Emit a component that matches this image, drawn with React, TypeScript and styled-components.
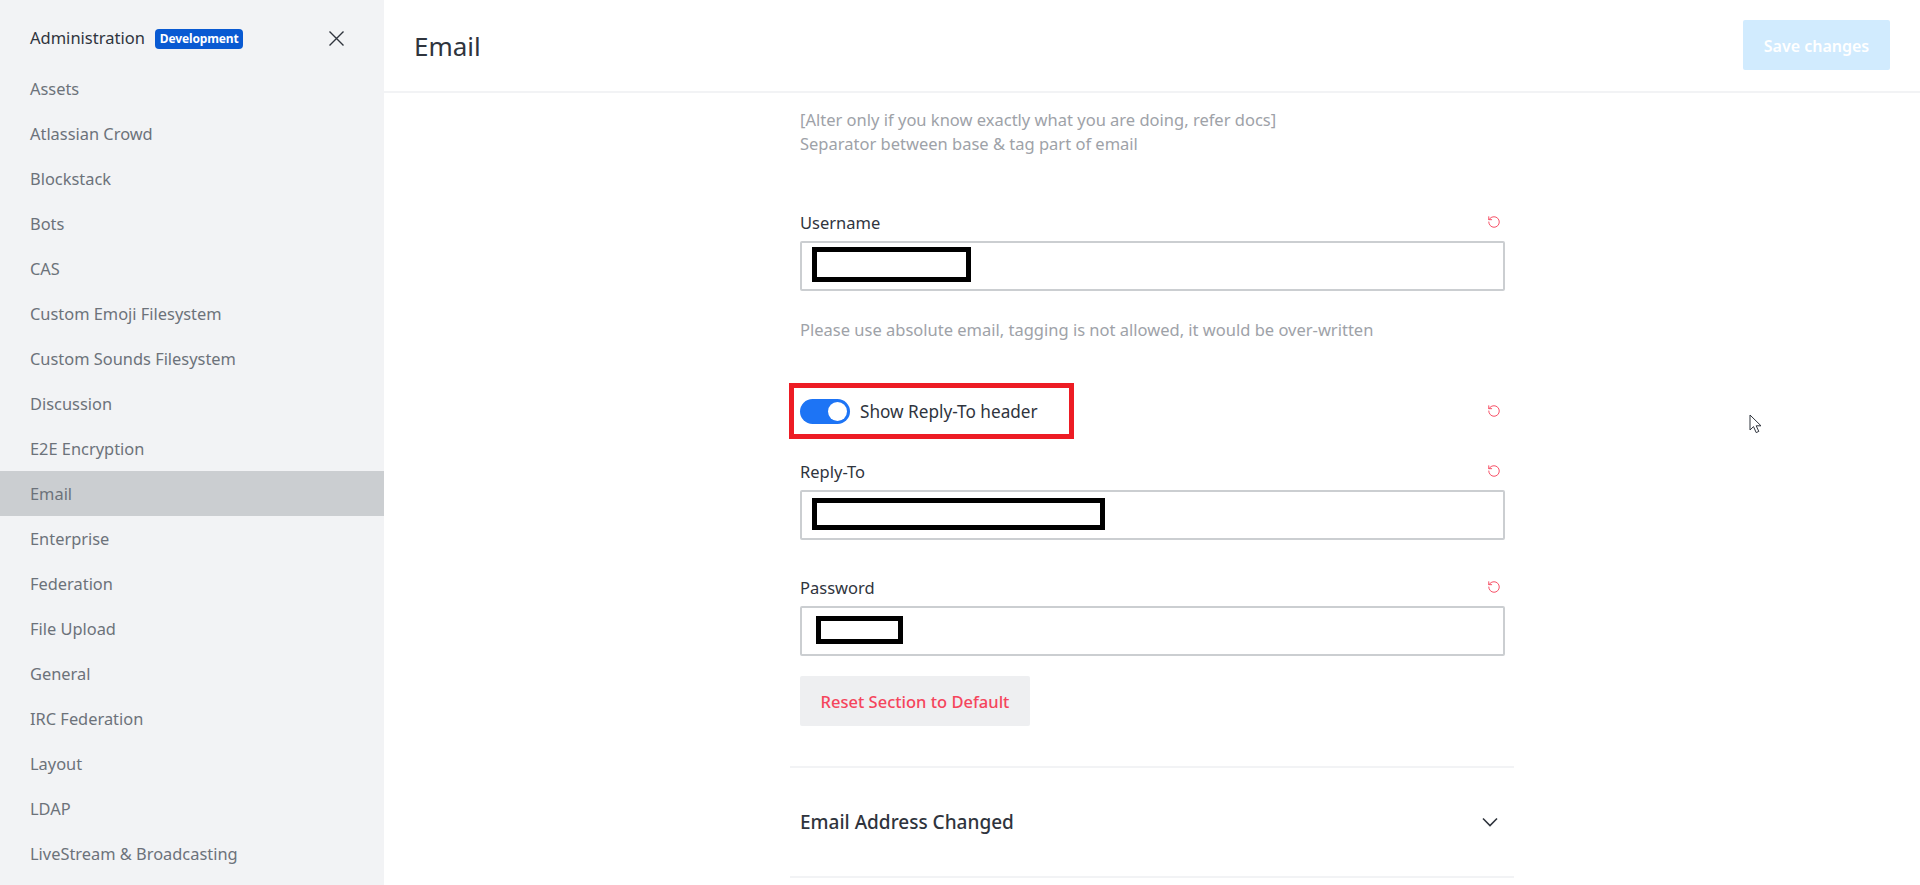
import styled, { createGlobalStyle } from 'styled-components';
import { RotateCcw } from 'lucide-react';

const GlobalStyle = createGlobalStyle`
    html, body {
        margin: 0;
        height: 100%;
        overflow: hidden;
        background: #fff;
    }
    * { box-sizing: border-box; }
    body {
        font-family: "Noto Sans", "Open Sans", sans-serif;
        color: #2f343d;
    }
`;

const Shell = styled.div`
    display: flex;
    width: 1920px;
    height: 885px;
    overflow: hidden;
`;

const Sidebar = styled.aside`
    flex: 0 0 384px;
    background: #f2f3f5;
    overflow: hidden;
`;

const SidebarHead = styled.div`
    display: flex;
    align-items: center;
    height: 66px;
    padding: 10px 40px 0 30px;
    font-size: 16.5px;
`;

const SidebarTitle = styled.span`
    margin-top: -2px;
    color: #2f343d;
`;

const Badge = styled.span`
    margin: 2px 0 0 10px;
    padding: 0 5px;
    height: 20px;
    line-height: 19px;
    border-radius: 4px;
    background: #095ad2;
    color: #fff;
    font-size: 12px;
    font-weight: 700;
    letter-spacing: -0.15px;
`;

const CloseButton = styled.span`
    display: flex;
    margin-left: auto;
    color: #2f343d;
`;

const NavItem = styled.div<{ $active?: boolean }>`
    display: flex;
    align-items: center;
    height: 45px;
    padding-left: 30px;
    font-size: 16.4px;
    color: #6c727a;
    background: ${p => (p.$active ? '#cbced1' : 'transparent')};
`;

const Main = styled.main`
    flex: 1;
    display: flex;
    flex-direction: column;
    min-width: 0;
`;

const TopBar = styled.header`
    flex: 0 0 93px;
    display: flex;
    align-items: center;
    justify-content: space-between;
    padding: 0 30px;
    border-bottom: 2px solid #f2f3f5;
`;

const PageTitle = styled.h1`
    margin: 0;
    font-size: 26px;
    font-weight: 400;
    color: #2f343d;
`;

const SaveButton = styled.button`
    width: 147px;
    height: 50px;
    margin-top: -2px;
    padding-top: 3px;
    border: 0;
    border-radius: 2px;
    background: #d1ebfe;
    color: #fff;
    font: 600 16px "Noto Sans", sans-serif;
`;

const Content = styled.div`
    flex: 1;
    overflow: hidden;
`;

const Form = styled.div`
    width: 724px;
    margin: 0 auto;
    padding-top: 15px;
`;

const Fields = styled.div`
    padding: 0 9px 0 10px;
`;

const Hint = styled.p<{ $gap: number }>`
    margin: 0 0 ${p => p.$gap}px;
    font-size: 16.5px;
    line-height: 24px;
    color: #9ea2a8;
`;

const FieldHead = styled.div`
    display: flex;
    align-items: center;
    justify-content: space-between;
    height: 24px;
    margin-bottom: 7px;
    padding-right: 4px;
    color: #f5455c;
`;

const Label = styled.label`
    font-size: 16.5px;
    color: #2f343d;
`;

const InputBox = styled.div<{ $gap: number }>`
    position: relative;
    height: 50px;
    margin-bottom: ${p => p.$gap}px;
    border: 2px solid #cbced1;
    border-radius: 2px;
`;

// black rectangles painted over the private values in the screenshot
const Redaction = styled.div<{ $left: number; $top: number; $width: number; $height: number }>`
    position: absolute;
    left: ${p => p.$left}px;
    top: ${p => p.$top}px;
    width: ${p => p.$width}px;
    height: ${p => p.$height}px;
    border: 5px solid #000;
`;

const ToggleRow = styled.div`
    position: relative;
    display: flex;
    align-items: center;
    justify-content: space-between;
    height: 28px;
    margin-bottom: 34px;
    padding-right: 4px;
    color: #f5455c;
`;

const ToggleLabel = styled.div`
    display: flex;
    align-items: center;
    gap: 10px;
    font-size: 17.2px;
    color: #2f343d;
`;

const Toggle = styled.span`
    position: relative;
    width: 50px;
    height: 25px;
    border-radius: 13px;
    background: #1d74f5;

    &::after {
        content: "";
        position: absolute;
        top: 3px;
        right: 3px;
        width: 19px;
        height: 19px;
        border-radius: 50%;
        background: #fff;
    }
`;

const Annotation = styled.div`
    position: absolute;
    left: -11px;
    top: -14px;
    width: 285px;
    height: 56px;
    border: 5px solid #ed1c24;
    pointer-events: none;
`;

const ResetSection = styled.button`
    width: 230px;
    height: 50px;
    border: 0;
    border-radius: 2px;
    background: #eeeff1;
    color: #f5455c;
    font: 500 16.5px "Noto Sans", sans-serif;
`;

const Section = styled.div`
    display: flex;
    align-items: center;
    justify-content: space-between;
    height: 112px;
    padding: 0 16px 0 10px;
    margin-top: 40px;
    border-top: 2px solid #f2f3f5;
    border-bottom: 2px solid #f2f3f5;
    font-size: 19px;
    font-weight: 500;
    color: #2f343d;
`;

const Cursor = styled.svg`
    position: absolute;
    left: 1749px;
    top: 414px;
    width: 13px;
    height: 20px;
`;

const navItems = [
    'Assets', 'Atlassian Crowd', 'Blockstack', 'Bots', 'CAS', 'Custom Emoji Filesystem',
    'Custom Sounds Filesystem', 'Discussion', 'E2E Encryption', 'Email', 'Enterprise',
    'Federation', 'File Upload', 'General', 'IRC Federation', 'Layout', 'LDAP',
    'LiveStream & Broadcasting',
];

const Undo = () => <RotateCcw size={14} strokeWidth={1.6} />;

export default function App() {
    return (
        <Shell>
            <GlobalStyle />
            <Sidebar>
                <SidebarHead>
                    <SidebarTitle>Administration</SidebarTitle>
                    <Badge>Development</Badge>
                    <CloseButton>
                        <svg width="15" height="15" viewBox="0 0 15 15" stroke="currentColor" strokeWidth="1.4">
                            <path d="M0.5 0.5L14.5 14.5M14.5 0.5L0.5 14.5" />
                        </svg>
                    </CloseButton>
                </SidebarHead>
                {navItems.map(item => (
                    <NavItem key={item} $active={item === 'Email'}>{item}</NavItem>
                ))}
            </Sidebar>
            <Main>
                <TopBar>
                    <PageTitle>Email</PageTitle>
                    <SaveButton>Save changes</SaveButton>
                </TopBar>
                <Content>
                    <Form>
                        <Fields>
                            <Hint $gap={54}>
                                [Alter only if you know exactly what you are doing, refer docs]<br />
                                Separator between base &amp; tag part of email
                            </Hint>
                            <FieldHead><Label>Username</Label><Undo /></FieldHead>
                            <InputBox $gap={27}>
                                <Redaction $left={10} $top={4} $width={159} $height={35} />
                            </InputBox>
                            <Hint $gap={55}>Please use absolute email, tagging is not allowed, it would be over-written</Hint>
                            <ToggleRow>
                                <ToggleLabel><Toggle />Show Reply-To header</ToggleLabel>
                                <Undo />
                                <Annotation />
                            </ToggleRow>
                            <FieldHead><Label>Reply-To</Label><Undo /></FieldHead>
                            <InputBox $gap={35}>
                                <Redaction $left={10} $top={6} $width={293} $height={32} />
                            </InputBox>
                            <FieldHead><Label>Password</Label><Undo /></FieldHead>
                            <InputBox $gap={20}>
                                <Redaction $left={14} $top={8} $width={87} $height={28} />
                            </InputBox>
                            <ResetSection>Reset Section to Default</ResetSection>
                        </Fields>
                        <Section>
                            Email Address Changed
                            <svg width="16" height="10" viewBox="0 0 16 10" fill="none" stroke="#2f343d" strokeWidth="1.6">
                                <path d="M1 1.5L8 8.5L15 1.5" />
                            </svg>
                        </Section>
                    </Form>
                </Content>
            </Main>
            <Cursor viewBox="0 0 13 20">
                <path d="M1 1V16L4.5 12.6L7.2 18.6L9.8 17.4L7.2 11.8H12Z" fill="#fff" stroke="#2f343d" strokeWidth="1" />
            </Cursor>
        </Shell>
    );
}
